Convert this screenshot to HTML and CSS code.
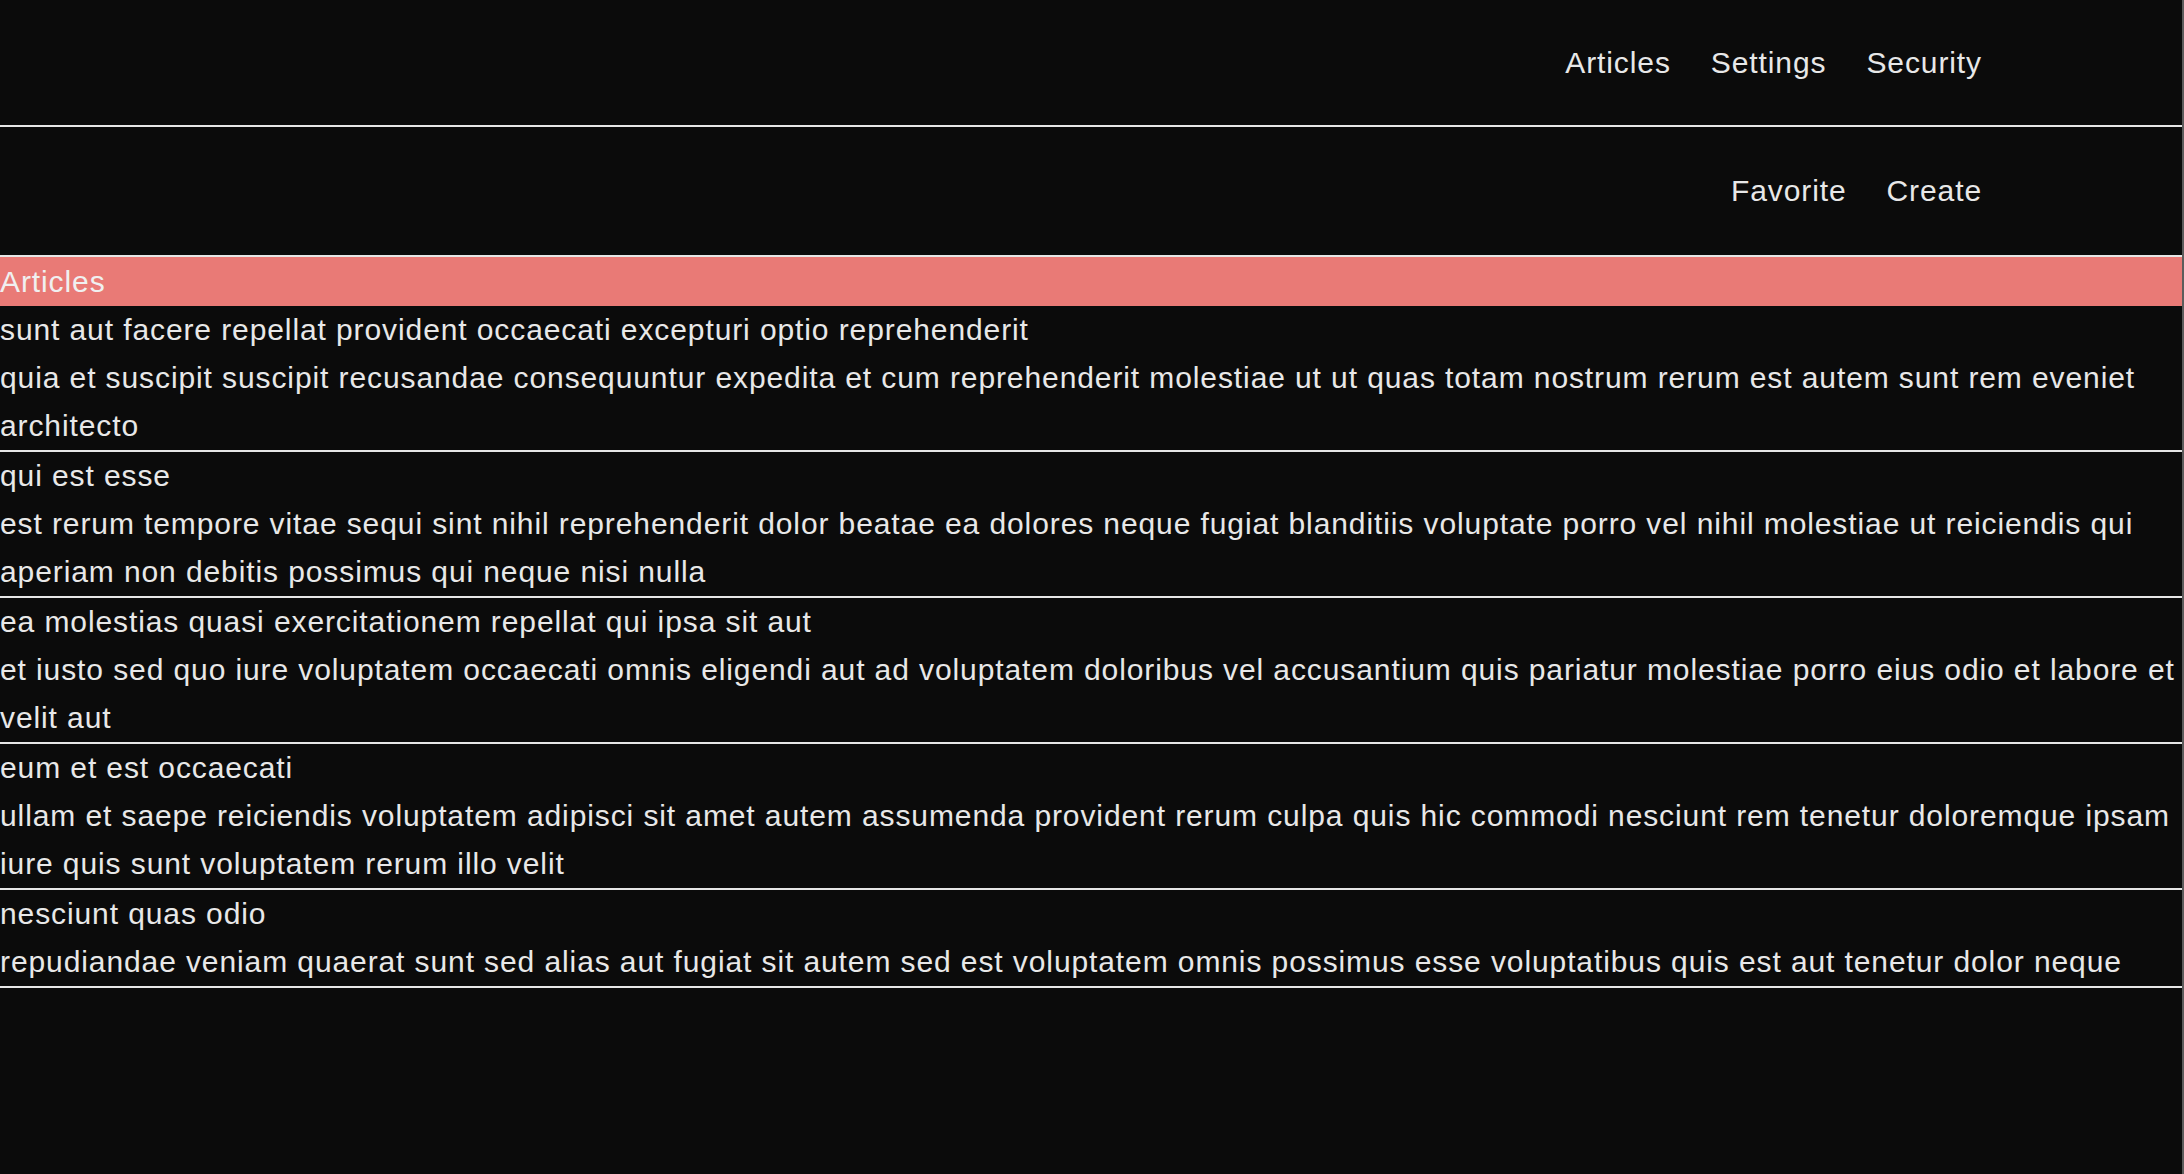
FILE: index.html
```html
<!DOCTYPE html>
<html>
<head>
<meta charset="utf-8">
<link rel="stylesheet" href="styles.css">
</head>
<body>
<div class="page">
  <nav class="nav nav-main">
    <a class="nav-link">Articles</a>
    <a class="nav-link">Settings</a>
    <a class="nav-link">Security</a>
  </nav>
  <nav class="nav nav-sub">
    <a class="nav-link">Favorite</a>
    <a class="nav-link">Create</a>
  </nav>
  <div class="section-title">Articles</div>
  <ul class="articles">
    <li class="article">
      <div class="article-title">sunt aut facere repellat provident occaecati excepturi optio reprehenderit</div>
      <div class="article-body">quia et suscipit suscipit recusandae consequuntur expedita et cum reprehenderit molestiae ut ut quas totam nostrum rerum est autem sunt rem eveniet architecto</div>
    </li>
    <li class="article">
      <div class="article-title">qui est esse</div>
      <div class="article-body">est rerum tempore vitae sequi sint nihil reprehenderit dolor beatae ea dolores neque fugiat blanditiis voluptate porro vel nihil molestiae ut reiciendis qui aperiam non debitis possimus qui neque nisi nulla</div>
    </li>
    <li class="article">
      <div class="article-title">ea molestias quasi exercitationem repellat qui ipsa sit aut</div>
      <div class="article-body">et iusto sed quo iure voluptatem occaecati omnis eligendi aut ad voluptatem doloribus vel accusantium quis pariatur molestiae porro eius odio et labore et velit aut</div>
    </li>
    <li class="article">
      <div class="article-title">eum et est occaecati</div>
      <div class="article-body">ullam et saepe reiciendis voluptatem adipisci sit amet autem assumenda provident rerum culpa quis hic commodi nesciunt rem tenetur doloremque ipsam iure quis sunt voluptatem rerum illo velit</div>
    </li>
    <li class="article">
      <div class="article-title">nesciunt quas odio</div>
      <div class="article-body">repudiandae veniam quaerat sunt sed alias aut fugiat sit autem sed est voluptatem omnis possimus esse voluptatibus quis est aut tenetur dolor neque</div>
    </li>
  </ul>
</div>
</body>
</html>
```

FILE: styles.css
```css
html, body {
  margin: 0;
  padding: 0;
  background: #0b0b0b;
}
body {
  font-family: "Liberation Sans", Arial, sans-serif;
  font-size: 30px;
  letter-spacing: 0.9px;
  color: #e8e8e8;
  min-height: 1174px;
  border-right: 2px solid #5c5c5c;
  box-sizing: border-box;
}
.nav {
  display: flex;
  justify-content: flex-end;
  align-items: center;
  gap: 40px;
  padding-right: 200px;
  border-bottom: 2px solid #e6e6e6;
}
.nav-main {
  height: 125px;
}
.nav-sub {
  height: 128px;
}
.nav-link {
  color: #e8e8e8;
  line-height: 48px;
}
.section-title {
  background: #e97a76;
  color: #f0f0f0;
  line-height: 49px;
}
.articles {
  list-style: none;
  margin: 0;
  padding: 0;
}
.article {
  border-bottom: 2px solid #e6e6e6;
  line-height: 48px;
}
```
